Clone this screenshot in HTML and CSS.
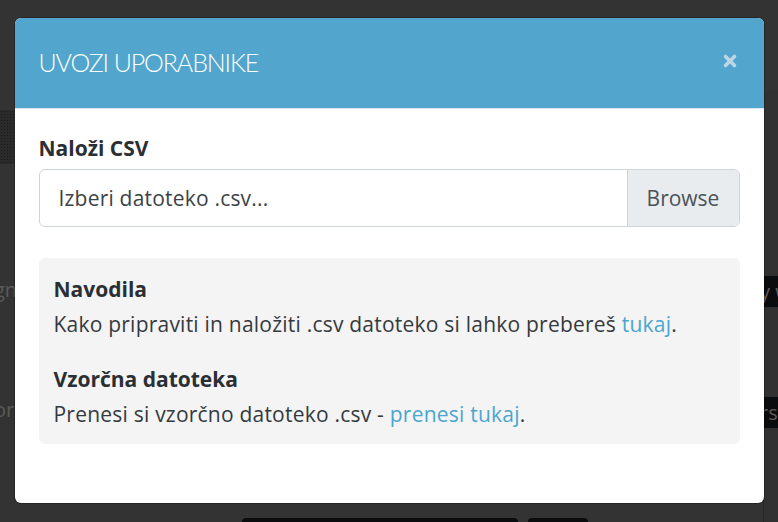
FILE: index.html
```html
<!DOCTYPE html>
<html lang="sl">
<head>
<meta charset="utf-8">
<title>Uvozi uporabnike</title>
<link rel="stylesheet" href="styles.css">
</head>
<body>
<div class="page">
  <div class="bg-dots"></div>
  <div class="bg-text bg-text-1">gn</div>
  <div class="bg-text bg-text-2">or</div>
  <div class="bg-right"></div>
  <div class="bg-chip bg-chip-1">y w</div>
  <div class="bg-chip bg-chip-2">rs</div>
  <div class="bg-bar bg-bar-1"></div>
  <div class="bg-bar bg-bar-2"></div>
</div>
<div class="overlay">
  <div class="modal">
    <div class="modal-header">
      <h1 class="modal-title">UVOZI UPORABNIKE</h1>
      <button class="close" aria-label="Zapri">
        <svg width="16" height="16" viewBox="0 0 16 16"><path d="M3.5 3.5 L12.5 12.5 M12.5 3.5 L3.5 12.5" stroke="currentColor" stroke-width="3.6" stroke-linecap="round"/></svg>
      </button>
    </div>
    <div class="modal-body">
      <label class="field-label">Naloži CSV</label>
      <div class="file-input">
        <span class="file-name">Izberi datoteko .csv...</span>
        <span class="file-browse">Browse</span>
      </div>
      <div class="info">
        <h2 class="info-title">Navodila</h2>
        <p class="info-text">Kako pripraviti in naložiti .csv datoteko si lahko prebereš <a href="#">tukaj</a>.</p>
        <h2 class="info-title info-title-second">Vzorčna datoteka</h2>
        <p class="info-text">Prenesi si vzorčno datoteko .csv - <a href="#">prenesi tukaj</a>.</p>
      </div>
    </div>
  </div>
</div>
</body>
</html>
```

FILE: styles.css
```css
* { box-sizing: border-box; }
html, body { margin: 0; padding: 0; }
body {
  width: 778px;
  height: 522px;
  overflow: hidden;
  background: #333333;
  font-family: "Open Sans", Lato, sans-serif;
  color: #343a40;
  position: relative;
}

/* faded page behind the backdrop */
.page { position: absolute; inset: 0; }
.bg-dots {
  position: absolute; left: 0; top: 110px; width: 14px; height: 54px;
  background-color: #2a2a2a;
  background-image: radial-gradient(#1c1c1c 0.8px, transparent 1px);
  background-size: 3px 3px;
}
.bg-text {
  position: absolute; left: -6px; font-size: 20px; color: #5a5a5a;
}
.bg-text-1 { top: 276px; }
.bg-text-2 { top: 396px; }
.bg-right {
  position: absolute; left: 763px; top: 90px; width: 15px; height: 432px;
  background: #313131; border-left: 1px solid #262626;
}
.bg-chip {
  position: absolute; left: 764px; width: 30px; height: 31px;
  background: #0a0c0d; color: #5d5d5d; font-size: 20px; line-height: 31px;
  text-indent: -4px; overflow: hidden; white-space: nowrap;
}
.bg-chip-1 { top: 276px; }
.bg-chip-2 { top: 397px; }
.bg-bar {
  position: absolute; top: 518px; height: 10px; background: #0a0c0d; border-radius: 4px;
}
.bg-bar-1 { left: 242px; width: 276px; }
.bg-bar-2 { left: 528px; width: 60px; }

.overlay {
  position: absolute; inset: 0;
  display: flex; justify-content: center; align-items: flex-start;
  padding-top: 18px;
}
.modal {
  width: 749px;
  height: 485px;
  background: #ffffff;
  border-radius: 6px;
  overflow: hidden;
  box-shadow: 0 0 0 1px rgba(0,0,0,0.25);
}
.modal-header {
  height: 91px;
  background: #52a5cc;
  border-bottom: 1px solid #d9e7ee;
  display: flex;
  align-items: center;
  justify-content: space-between;
  padding: 0 25px 0 24px;
}
.modal-title {
  margin: 0;
  font-family: Lato, sans-serif;
  font-weight: 300;
  font-size: 25px;
  color: #ffffff;
  letter-spacing: -1.1px;
  margin-top: -3px;
}
.close {
  border: 0; background: none; padding: 0; margin: 0;
  width: 16px; height: 16px; color: #bcd6e5;
  display: flex; margin-top: -5px; margin-right: 1px;
}

.modal-body {
  padding: 24px 24px 60px 24px;
}
.field-label {
  display: block;
  font-weight: 700;
  font-size: 21px;
  line-height: 30px;
  color: #2b2f33;
  margin-bottom: 6px;
}
.file-input {
  height: 58px;
  border: 1px solid #ced4da;
  border-radius: 6px;
  display: flex;
  align-items: stretch;
  overflow: hidden;
  font-size: 21px;
}
.file-name {
  flex: 1;
  display: flex; align-items: center;
  padding-left: 19px;
  color: #3d4247;
  letter-spacing: 0.2px;
}
.file-browse {
  width: 112px;
  display: flex; align-items: center; justify-content: center;
  background: #e9ecef;
  border-left: 1px solid #ced4da;
  color: #4b5258;
}

.info {
  margin-top: 31px;
  background: #f4f4f4;
  border-radius: 6px;
  padding: 15px 15px 13px 15px;
}
.info-title {
  margin: 0;
  font-size: 21px;
  font-weight: 700;
  line-height: 33px;
  color: #2b2f33;
}
.info-title-second { margin-top: 22px; }
.info-text {
  margin: 2px 0 0 0;
  font-size: 21px;
  line-height: 33px;
  color: #343a40;
  letter-spacing: 0.22px;
}
.info-text a { color: #4aa6d0; text-decoration: none; }
```
